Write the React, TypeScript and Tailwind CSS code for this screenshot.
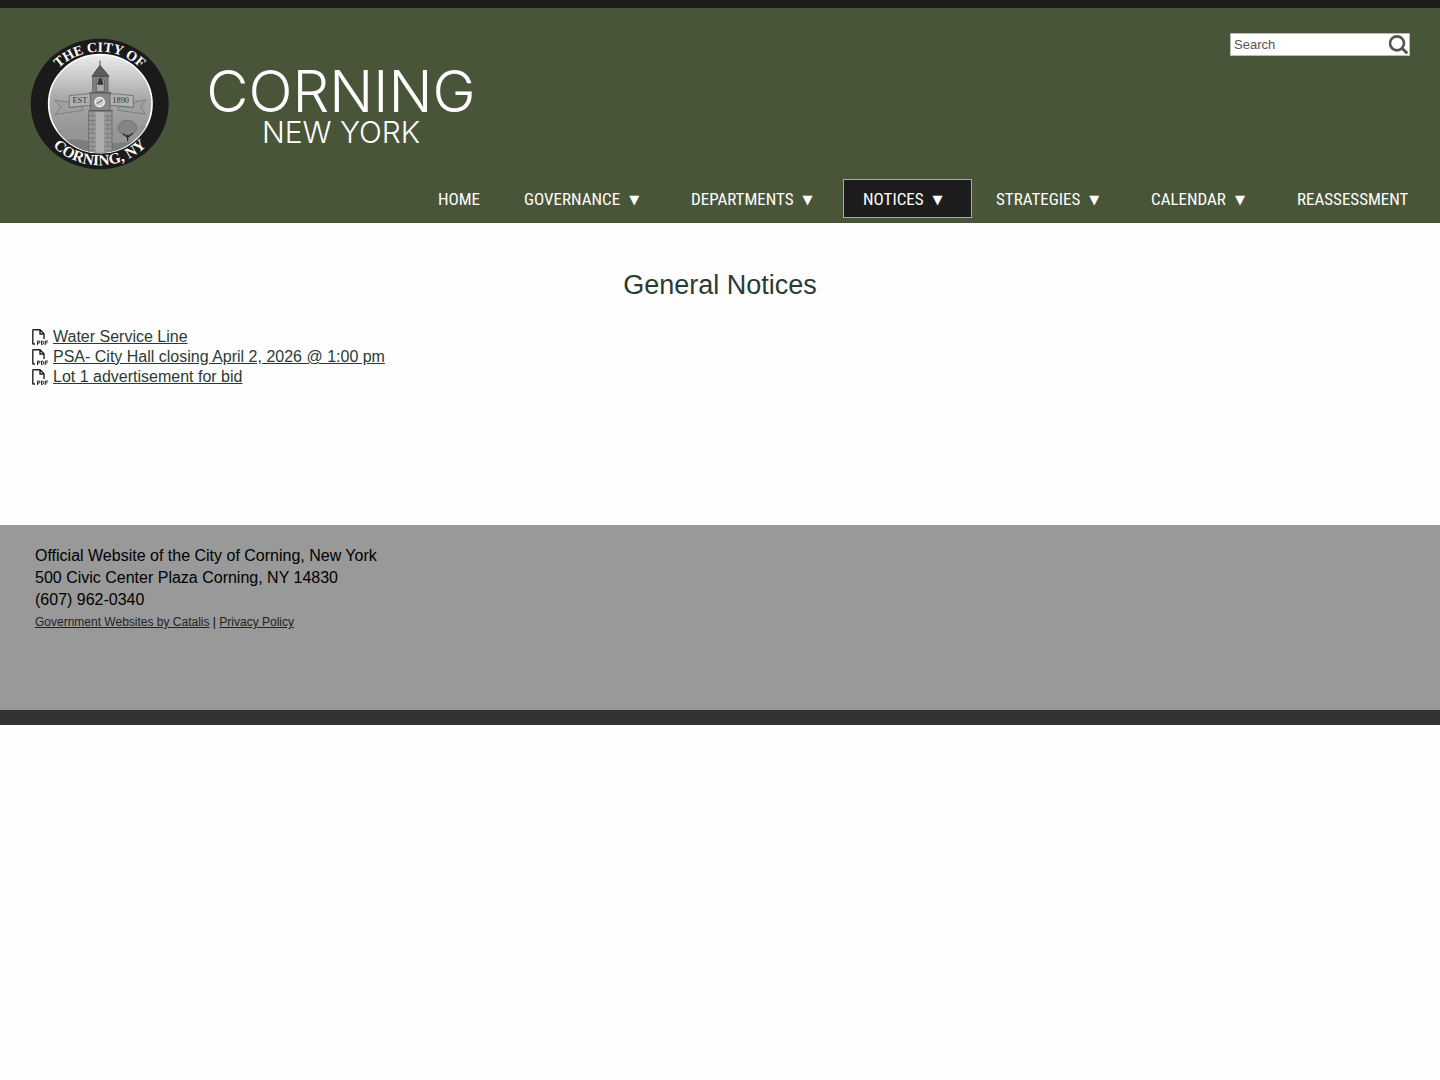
const navItems = [
  { label: "HOME", menu: false, width: "w-[82px]" },
  { label: "GOVERNANCE", menu: true, width: "w-[163px]" },
  { label: "DEPARTMENTS", menu: true, width: "w-[168px]" },
  { label: "NOTICES", menu: true, width: "w-[129px]", active: true },
  { label: "STRATEGIES", menu: true, width: "w-[151px]" },
  { label: "CALENDAR", menu: true, width: "w-[142px]" },
  { label: "REASSESSMENT", menu: false, width: "w-[148px]" },
];

const notices = [
  "Water Service Line",
  "PSA- City Hall closing April 2, 2026 @ 1:00 pm",
  "Lot 1 advertisement for bid",
];

function CitySeal() {
  return (
    <svg viewBox="30 24 417 396" className="h-[132px] w-[139px] shrink-0" aria-hidden="true">
      <defs>
        <linearGradient id="sky" x1="0" y1="0" x2="0" y2="1">
          <stop offset="0" stopColor="#ececec" />
          <stop offset="0.45" stopColor="#a8a8a8" />
          <stop offset="1" stopColor="#8a8a8a" />
        </linearGradient>
        <clipPath id="inner">
          <ellipse cx="241" cy="221" rx="154" ry="147" />
        </clipPath>
        <path id="arc-top" d="M71 222 A168 157 0 0 1 407 222" />
        <path id="arc-bottom" d="M46 222 A193 184 0 0 0 432 222" />
      </defs>
      <ellipse cx="239" cy="222" rx="207" ry="196" fill="#1a1a1b" />
      <ellipse cx="241" cy="221" rx="155" ry="147" fill="url(#sky)" stroke="#fff" strokeWidth="5" />
      <g clipPath="url(#inner)">
        {/* hills */}
        <path d="M80 312 Q125 290 172 304 T290 300 T410 290 V380 H80Z" fill="#959595" />
        <path d="M80 345 Q150 318 205 334 T410 325 V390 H80Z" fill="#7c7c7c" />
        {/* tree */}
        <ellipse cx="322" cy="293" rx="28" ry="22" fill="#858585" stroke="#666" strokeWidth="2" />
        <path d="M323 333 V314 M323 322 L308 311 M323 322 L339 310" stroke="#252525" strokeWidth="4" fill="none" />
        {/* ribbon */}
        <path d="M150 217 L104 210 L123 231 L105 254 L188 241 V229 L150 232Z" fill="#a0a0a0" stroke="#6c6c6c" strokeWidth="2" />
        <path d="M338 217 L378 210 L362 231 L376 252 L294 241 V229 L338 232Z" fill="#a0a0a0" stroke="#6c6c6c" strokeWidth="2" />
        <path d="M148 197 Q241 184 340 197 V232 Q241 219 148 232Z" fill="#b2b2b2" stroke="#5c5c5c" strokeWidth="2" />
        {/* tower */}
        <path d="M206 370 V242 H276 V370Z" fill="#999" stroke="#5c5c5c" strokeWidth="2" />
        <path d="M228 370 V246 H252 V370Z" fill="#adadad" />
        <path
          d="M207 258h20M254 258h21M207 271h20M254 271h21M207 284h20M254 284h21M207 297h20M254 297h21M207 310h20M254 310h21M207 323h20M254 323h21M207 336h20M254 336h21M207 349h20M254 349h21M207 362h20M254 362h21M217 245v13M264 258v13M217 271v13M264 284v13M217 297v13M264 310v13M217 323v13M264 336v13M217 349v13"
          stroke="#6c6c6c"
          strokeWidth="2"
          fill="none"
        />
        <path d="M211 188 H270 V242 H211Z" fill="#888" stroke="#505050" strokeWidth="2" />
        <path d="M218 139 H264 V188 H218Z" fill="#808080" stroke="#4c4c4c" strokeWidth="2" />
        <path d="M229 185 V152 Q241 138 253 152 V185Z" fill="#aaa" stroke="#484848" strokeWidth="2" />
        <path d="M232 164 Q235 144 241 144 Q247 144 250 164Z" fill="#333" />
        <path d="M240 92 V106 L216 139 H267 L240 106" fill="#5c5c5c" stroke="#4a4a4a" strokeWidth="3" />
        <path d="M209 188H273M207 242H278" stroke="#5c5c5c" strokeWidth="4" />
        <circle cx="239" cy="216" r="14" fill="#ccc" stroke="#f5f5f5" strokeWidth="4" />
        <path d="M230 221 L248 210" stroke="#555" strokeWidth="3" />
      </g>
      <g fontFamily="Liberation Serif, serif">
        <text x="182" y="220" textAnchor="middle" fontSize="25" fill="#333">EST.</text>
        <text x="302" y="220" textAnchor="middle" fontSize="25" fill="#333">1890</text>
        <g fill="#fff" textAnchor="middle" fontWeight="700">
          <text fontSize="42">
            <textPath href="#arc-top" startOffset="50%">THE CITY OF</textPath>
          </text>
          <text fontSize="46">
            <textPath href="#arc-bottom" startOffset="50%">CORNING, NY</textPath>
          </text>
        </g>
      </g>
    </svg>
  );
}

function SearchIcon() {
  return (
    <svg viewBox="0 0 57 57" className="size-[19px]" fill="none" stroke="#555" aria-hidden="true">
      <circle cx="24" cy="25" r="21" strokeWidth="8" />
      <path d="M38 39 L55 55" strokeWidth="9" />
    </svg>
  );
}

function PdfIcon() {
  return (
    <svg viewBox="0 0 16 16" className="size-4 shrink-0" fill="none" stroke="#222" aria-hidden="true">
      <path d="M3 15H1.2Q.8 15 .8 14.5V1.5Q.8 .8 1.5 .8H8L12 4.8V10M8 1V5H12" strokeWidth="1.4" />
      <path d="M5.5 16V12H7Q8 12 8 13T7 14H5.5M9.5 15.5V12H10.2Q11.6 12 11.6 13.7T10.2 15.5H9.5M13.2 16V12H16M13.2 13.8H15.5" strokeWidth="1" />
    </svg>
  );
}

export default function App() {
  return (
    <div className="min-h-screen bg-[#fefefe] font-['Liberation_Sans',Arial,sans-serif] text-base">
      <header className="border-t-8 border-[#1c1c1c] bg-[#495539]">
        <div className="flex items-start justify-between px-[30px] pt-[30px]">
          <a href="#" className="flex items-start gap-[22px] text-[#fefefe]">
            <CitySeal />
            <div className="flex w-[300px] flex-col items-center pt-[30px] font-['Inter',sans-serif] font-light whitespace-nowrap">
              <div className="text-[58px] leading-[46px]">CORNING</div>
              <div className="text-[30px] leading-[36px]">NEW YORK</div>
            </div>
          </a>
          <form className="-mt-[5px] flex h-[23px] w-[180px] items-center border border-[#bbb] bg-white">
            <input
              type="text"
              aria-label="Search"
              placeholder="Search"
              className="w-full min-w-0 px-[3px] text-[13px] text-[#444] outline-none placeholder:text-[#555]"
            />
            <button type="submit" aria-label="Submit search" className="px-px">
              <SearchIcon />
            </button>
          </form>
        </div>
        <nav className="flex justify-end gap-1 pt-[9px] pr-[15px] pb-[5px]">
          {navItems.map((item) => (
            <a
              key={item.label}
              href="#"
              className={`flex h-[39px] shrink-0 items-center gap-[9px] border pt-0.5 pl-[19px] font-['Roboto_Condensed','Liberation_Sans_Narrow',sans-serif] text-[17px] whitespace-nowrap text-[#fefefe] ${item.width} ${
                item.active ? "border-[#aaa] bg-[#1c1c1c]" : "border-transparent"
              }`}
            >
              {item.label}
              {item.menu && <span className="font-['DejaVu_Sans'] text-[13px]">▼</span>}
            </a>
          ))}
        </nav>
      </header>

      <main className="h-[302px] px-8 pt-[42px]">
        <h1 className="text-center text-[27px] leading-10 text-[#2b3b33]">General Notices</h1>
        <ul className="pt-[22px]">
          {notices.map((notice) => (
            <li key={notice} className="flex h-5 items-center gap-[5px]">
              <PdfIcon />
              <a href="#" className="leading-5 text-[#2b3b33] underline">
                {notice}
              </a>
            </li>
          ))}
        </ul>
      </main>

      <footer className="h-[200px] border-b-[15px] border-[#333] bg-[#999] px-[35px] pt-5 leading-[22px] text-black">
        <p>Official Website of the City of Corning, New York</p>
        <p>500 Civic Center Plaza Corning, NY 14830</p>
        <p>(607) 962-0340</p>
        <p className="text-[12px]">
          <a href="#" className="text-[#222] underline">Government Websites by Catalis</a> |{" "}
          <a href="#" className="text-[#222] underline">Privacy Policy</a>
        </p>
      </footer>
    </div>
  );
}
